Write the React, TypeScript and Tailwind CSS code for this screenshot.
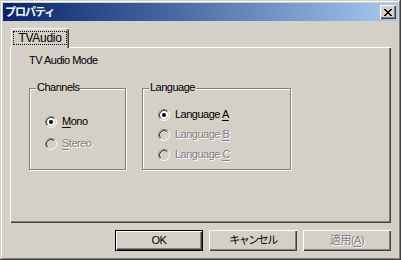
import React from "react";

function Radio({ checked, disabled }: { checked?: boolean; disabled?: boolean }) {
  return (
    <svg width="12" height="12" viewBox="0 0 12 12" className="shrink-0">
      <circle cx="6" cy="6" r="4" fill={disabled ? "#d4d0c8" : "#ffffff"} />
      <path d="M2.11 9.89 A5.5 5.5 0 0 1 9.89 2.11" stroke="#808080" fill="none" />
      <path d="M9.89 2.11 A5.5 5.5 0 0 1 2.11 9.89" stroke="#ffffff" fill="none" />
      <path d="M2.82 9.18 A4.5 4.5 0 0 1 9.18 2.82" stroke="#404040" fill="none" />
      <path d="M9.18 2.82 A4.5 4.5 0 0 1 2.82 9.18" stroke="#d4d0c8" fill="none" />
      {checked && <circle cx="6" cy="6" r="2" fill="#000000" />}
    </svg>
  );
}

function CloseX() {
  const rows = ["11000011", "01100110", "00111100", "00011000", "00111100", "01100110", "11000011"];
  const rects: React.ReactElement[] = [];
  rows.forEach((r, y) =>
    r.split("").forEach((c, x) => {
      if (c === "1") rects.push(<rect key={`${x}-${y}`} x={x} y={y} width="1" height="1" fill="#000" />);
    })
  );
  return (
    <svg width="8" height="7" viewBox="0 0 8 7" shapeRendering="crispEdges">
      {rects}
    </svg>
  );
}

function Row({ children, checked, disabled }: { children: React.ReactNode; checked?: boolean; disabled?: boolean }) {
  return (
    <div className="flex items-center h-[13px] gap-[5px]">
      <Radio checked={checked} disabled={disabled} />
      <span className={disabled ? "text-[#808080] [text-shadow:1px_1px_0_#ffffff]" : "text-black"}>{children}</span>
    </div>
  );
}

function U({ children }: { children: React.ReactNode }) {
  return <span className="underline underline-offset-[2px] decoration-1">{children}</span>;
}

export default function App() {
  return (
    <div className="w-[401px] h-[260px] bg-[#d4d0c8] p-[3px] flex flex-col font-['Liberation_Sans','Noto_Sans_CJK_JP',sans-serif] text-[11px] leading-[13px] tracking-[-0.5px] text-black shadow-[inset_-1px_-1px_0_#404040,inset_1px_1px_0_#d4d0c8,inset_-2px_-2px_0_#808080,inset_2px_2px_0_#ffffff]">
      <div className="h-[18px] shrink-0 flex items-center justify-between bg-linear-to-r from-[#0a246a] to-[#a6caf0]">
        <span className="pl-[2px] text-white font-bold tracking-[-1px]">プロパティ</span>
        <div className="mr-[2px] w-[16px] h-[14px] bg-[#d4d0c8] flex items-center justify-center shadow-[inset_1px_1px_0_#ffffff,inset_-1px_-1px_0_#404040,inset_-2px_-2px_0_#808080]">
          <CloseX />
        </div>
      </div>
      <div className="flex flex-col px-[7px] pt-[7px]">
        <div className="flex">
          <div className="ml-[1px] relative z-10 -mb-[1px] w-[58px] h-[20px] bg-[#d4d0c8] border-l border-t border-white rounded-t-[2px] shadow-[inset_-1px_0_0_#404040,inset_-2px_0_0_#808080] pl-[1px] pt-[2px]">
            <div className="w-[54px] h-[14px] border border-dotted border-black flex items-center justify-center text-[12px] tracking-[-0.3px]">
              TVAudio
            </div>
          </div>
        </div>
        <div className="h-[176px] border-l border-t border-white shadow-[inset_-1px_-1px_0_#404040,inset_-2px_-2px_0_#808080] pl-[18px] pt-[6px] flex flex-col">
          <div className="h-[13px]">TV Audio Mode</div>
          <div className="flex gap-[16px] mt-[21px]">
            <div className="relative w-[97px] h-[82px] border border-[#808080] shadow-[1px_1px_0_#ffffff,inset_1px_1px_0_#ffffff] pt-[26px] pl-[15px] flex flex-col gap-[9px]">
              <span className="absolute left-[6px] -top-[8px] px-[1px] bg-[#d4d0c8] leading-[13px]">Channels</span>
              <Row checked>
                <U>M</U>ono
              </Row>
              <Row disabled>
                <U>S</U>tereo
              </Row>
            </div>
            <div className="relative w-[149px] h-[82px] border border-[#808080] shadow-[1px_1px_0_#ffffff,inset_1px_1px_0_#ffffff] pt-[19px] pl-[15px] flex flex-col gap-[7px]">
              <span className="absolute left-[6px] -top-[8px] px-[1px] bg-[#d4d0c8] leading-[13px]">Language</span>
              <Row checked>
                Language <U>A</U>
              </Row>
              <Row disabled>
                Language <U>B</U>
              </Row>
              <Row disabled>
                Language <U>C</U>
              </Row>
            </div>
          </div>
        </div>
        <div className="flex justify-end gap-[6px] mt-[7px]">
          <div className="w-[88px] h-[21px] border border-black flex items-center justify-center shadow-[inset_1px_1px_0_#ffffff,inset_-1px_-1px_0_#404040,inset_-2px_-2px_0_#808080]">
            OK
          </div>
          <div className="w-[88px] h-[21px] flex items-center justify-center tracking-[-1.5px] shadow-[inset_1px_1px_0_#ffffff,inset_-1px_-1px_0_#404040,inset_-2px_-2px_0_#808080]">
            キャンセル
          </div>
          <div className="w-[88px] h-[21px] flex items-center justify-center tracking-[-0.5px] text-[#808080] [text-shadow:1px_1px_0_#ffffff] shadow-[inset_1px_1px_0_#ffffff,inset_-1px_-1px_0_#404040,inset_-2px_-2px_0_#808080]">
            適用(<U>A</U>)
          </div>
        </div>
      </div>
    </div>
  );
}
